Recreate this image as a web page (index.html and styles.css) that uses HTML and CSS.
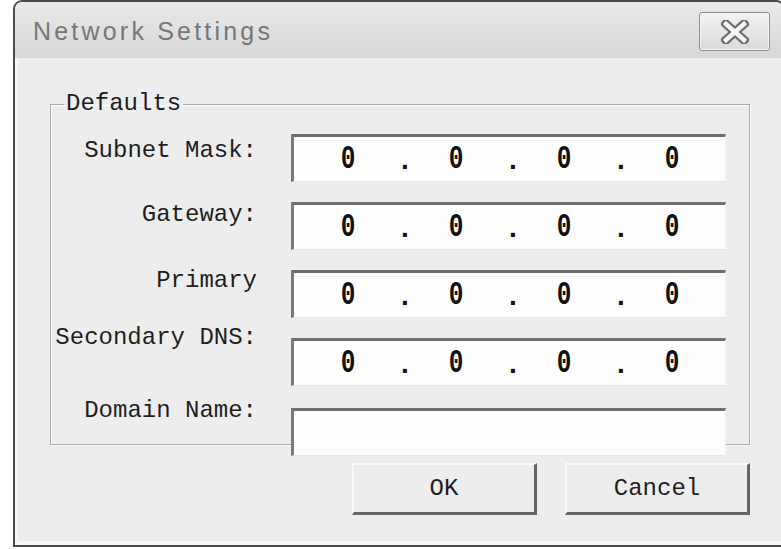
FILE: index.html
```html
<!DOCTYPE html>
<html lang="en">
<head>
    <meta charset="UTF-8">
    <title>Network Settings</title>
    <link rel="stylesheet" href="styles.css">
</head>
<body>
    <div class="window">
        <div class="titlebar">
            <span class="title">Network Settings</span>
            <button class="close-btn" type="button" aria-label="Close">
                <svg width="28" height="24" viewBox="0 0 28 24">
                    <path d="M5 4 L23 20 M23 4 L5 20" stroke="#6c6c6c" stroke-width="9" stroke-linecap="square"/>
                    <path d="M5 4 L23 20 M23 4 L5 20" stroke="#f4f4f4" stroke-width="4.5" stroke-linecap="square"/>
                </svg>
            </button>
        </div>

        <div class="content">
            <fieldset class="group">
                <legend>Defaults</legend>
                <div class="group-body">
                    <div class="labels">
                        <label>Subnet Mask:</label>
                        <label>Gateway:</label>
                        <label>Primary</label>
                        <label>Secondary DNS:</label>
                        <label>Domain Name:</label>
                    </div>

                    <div class="fields">
                        <div class="ip-field">
                            <span>0</span><span class="dot">.</span><span>0</span><span class="dot">.</span><span>0</span><span class="dot">.</span><span>0</span>
                        </div>
                        <div class="ip-field">
                            <span>0</span><span class="dot">.</span><span>0</span><span class="dot">.</span><span>0</span><span class="dot">.</span><span>0</span>
                        </div>
                        <div class="ip-field">
                            <span>0</span><span class="dot">.</span><span>0</span><span class="dot">.</span><span>0</span><span class="dot">.</span><span>0</span>
                        </div>
                        <div class="ip-field">
                            <span>0</span><span class="dot">.</span><span>0</span><span class="dot">.</span><span>0</span><span class="dot">.</span><span>0</span>
                        </div>
                        <div class="text-field"></div>
                    </div>
                </div>
            </fieldset>

            <div class="actions">
                <button class="btn" type="button">OK</button>
                <button class="btn" type="button">Cancel</button>
            </div>
        </div>
    </div>
</body>
</html>
```

FILE: styles.css
```css
html, body {
    margin: 0;
    padding: 0;
    overflow: hidden;
    background-color: #fff;
}
body {
    font-family: "Liberation Mono", "DejaVu Sans Mono", monospace;
    font-size: 24px;
    color: #1e1e1e;
}
.window {
    margin-left: 13px;
    width: 772px;
    height: 547px;
    box-sizing: border-box;
    border: 2px solid #4b4b4b;
    border-top-left-radius: 9px;
    border-top-right-radius: 9px;
    background-color: #ededed;
    display: flex;
    flex-direction: column;
    overflow: hidden;
}
.titlebar {
    height: 56px;
    flex-shrink: 0;
    display: flex;
    align-items: center;
    justify-content: space-between;
    padding: 0 13px 0 18px;
    background: linear-gradient(#e9e9e9, #d7d7d7);
}
.title {
    font-family: "Liberation Sans", Arial, sans-serif;
    font-size: 25px;
    letter-spacing: 3.2px;
    color: #777;
    margin-top: 2px;
}
.close-btn {
    width: 71px;
    height: 39px;
    margin-top: 3px;
    padding: 0;
    border: 1px solid #8c8c8c;
    border-radius: 3px;
    background: linear-gradient(#f3f3f3, #dadada);
    box-shadow: inset 0 0 0 1px #f7f7f7;
    display: flex;
    align-items: center;
    justify-content: center;
}
.content {
    flex: 1;
    padding-top: 34px;
    box-shadow: inset 3px -4px 0 #f7f7f7;
}
.group {
    margin: 0 0 0 35px;
    width: 700px;
    height: 353px;
    box-sizing: border-box;
    padding: 18px 0 0 0;
    border: 1px solid #a9a9a9;
    box-shadow: 1px 1px 0 #fafafa, inset 1px 1px 0 #fafafa;
}
.group legend {
    margin-left: 13px;
    padding: 0 2px;
    line-height: 24px;
}
.group-body {
    display: flex;
    gap: 34px;
}
.labels {
    width: 206px;
    display: flex;
    flex-direction: column;
    align-items: flex-end;
}
.labels label {
    line-height: 28px;
    white-space: nowrap;
}
.labels label:nth-child(1) { margin-top: 3px; }
.labels label:nth-child(2) { margin-top: 36px; }
.labels label:nth-child(3) { margin-top: 38px; }
.labels label:nth-child(4) { margin-top: 29px; }
.labels label:nth-child(5) { margin-top: 45px; }
.fields {
    width: 435px;
    display: flex;
    flex-direction: column;
    gap: 20px;
}
.ip-field,
.text-field {
    height: 48px;
    box-sizing: border-box;
    background-color: #fdfdfd;
    border-top: 3px solid #6e6e6e;
    border-left: 3px solid #7a7a7a;
    border-right: 1px solid #f2f2f2;
    border-bottom: 1px solid #e6e6e6;
}
.text-field {
    margin-top: 2px;
}
.ip-field {
    display: grid;
    grid-template-columns: repeat(7, 54px);
    align-items: center;
    padding-left: 27px;
    font-weight: bold;
    font-size: 34px;
    color: #111;
}
.ip-field span {
    text-align: center;
    transform: scaleX(0.72);
}
.ip-field .dot {
    padding-left: 6px;
    font-size: 28px;
    padding-top: 4px;
    transform: none;
}
.actions {
    display: flex;
    justify-content: flex-end;
    gap: 28px;
    width: 735px;
    margin-top: 18px;
}
.btn {
    width: 185px;
    height: 52px;
    box-sizing: border-box;
    font-family: "Liberation Mono", "DejaVu Sans Mono", monospace;
    font-size: 24px;
    color: #1e1e1e;
    background-color: #ededed;
    border-top: 2px solid #fafafa;
    border-left: 2px solid #fafafa;
    border-right: 3px solid #666;
    border-bottom: 3px solid #666;
    padding: 0;
}
```
